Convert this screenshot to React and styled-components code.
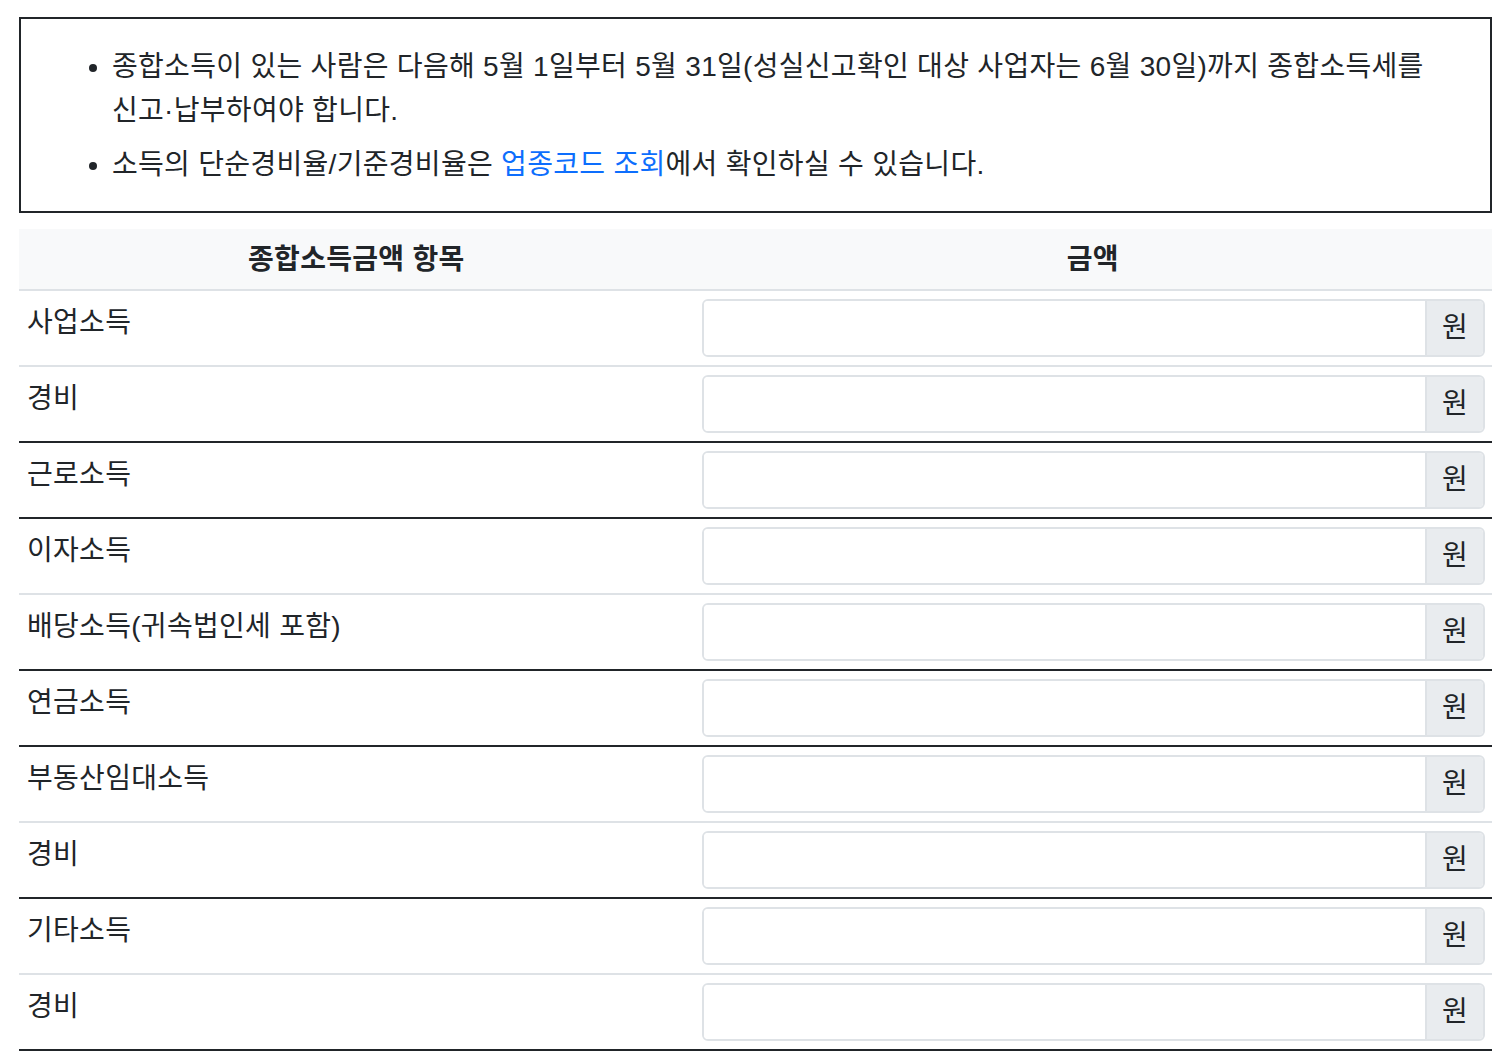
import React from "react";
import styled, { createGlobalStyle } from "styled-components";

const rows = [
  { label: "사업소득", line: "light" },
  { label: "경비", line: "dark" },
  { label: "근로소득", line: "dark" },
  { label: "이자소득", line: "light" },
  { label: "배당소득(귀속법인세 포함)", line: "dark" },
  { label: "연금소득", line: "dark" },
  { label: "부동산임대소득", line: "light" },
  { label: "경비", line: "dark" },
  { label: "기타소득", line: "light" },
  { label: "경비", line: "dark" },
];

export default function App() {
  return (
    <>
      <GlobalStyle />
      <Page>
        <Notice>
          <NoticeList>
            <li>
              종합소득이 있는 사람은 다음해 5월 1일부터 5월 31일(성실신고확인 대상
              사업자는 6월 30일)까지 종합소득세를 신고·납부하여야 합니다.
            </li>
            <li>
              소득의 단순경비율/기준경비율은 <Link href="#">업종코드 조회</Link>에서
              확인하실 수 있습니다.
            </li>
          </NoticeList>
        </Notice>
        <Table>
          <colgroup>
            <col style={{ width: "45.8%" }} />
            <col />
          </colgroup>
          <thead>
            <tr>
              <Th>종합소득금액 항목</Th>
              <Th>금액</Th>
            </tr>
          </thead>
          <tbody>
            {rows.map((r, i) => (
              <Row key={i} line={r.line}>
                <Label>{r.label}</Label>
                <Cell>
                  <InputGroup>
                    <Input type="text" />
                    <Addon>원</Addon>
                  </InputGroup>
                </Cell>
              </Row>
            ))}
          </tbody>
        </Table>
      </Page>
    </>
  );
}

const GlobalStyle = createGlobalStyle`
  body {
    margin: 0;
    background: #fff;
    color: #212529;
    font-family: "Liberation Sans", "Noto Sans CJK KR", sans-serif;
    font-size: 28px;
    line-height: 44px;
    letter-spacing: 0.3px;
  }
`;

const Page = styled.div`
  padding: 17px 18px 10px 19px;
`;

const Notice = styled.div`
  border: 2px solid #212529;
  padding: 26px 26px 24px 26px;
`;

const NoticeList = styled.ul`
  margin: 0;
  padding-left: 65px;
  word-break: keep-all;

  li + li {
    margin-top: 10px;
  }
`;

const Link = styled.a`
  color: #0d6efd;
  text-decoration: none;
`;

const Table = styled.table`
  width: 100%;
  margin-top: 16px;
  border-collapse: collapse;
  table-layout: fixed;
`;

const Th = styled.th`
  background: #f8f9fa;
  padding: 9px 8px 7px;
  font-weight: 700;
  text-align: center;
  border-bottom: 2px solid #dee2e6;
`;

const Row = styled.tr`
  border-bottom: 2px solid ${({ line }) => (line === "dark" ? "#212529" : "#dee2e6")};
`;

const Label = styled.td`
  padding: 10px 8px 6px;
  vertical-align: top;
`;

const Cell = styled.td`
  padding: 8px 7px 8px 8px;
`;

const InputGroup = styled.div`
  display: flex;
  height: 58px;
  border: 2px solid #dee2e6;
  border-radius: 6px;
  overflow: hidden;
  box-sizing: border-box;
`;

const Input = styled.input`
  flex: 1;
  min-width: 0;
  border: 0;
  outline: none;
  padding: 0 12px;
  font: inherit;
`;

const Addon = styled.span`
  width: 56px;
  display: flex;
  align-items: center;
  justify-content: center;
  background: #e9ecef;
  border-left: 2px solid #dee2e6;
`;
